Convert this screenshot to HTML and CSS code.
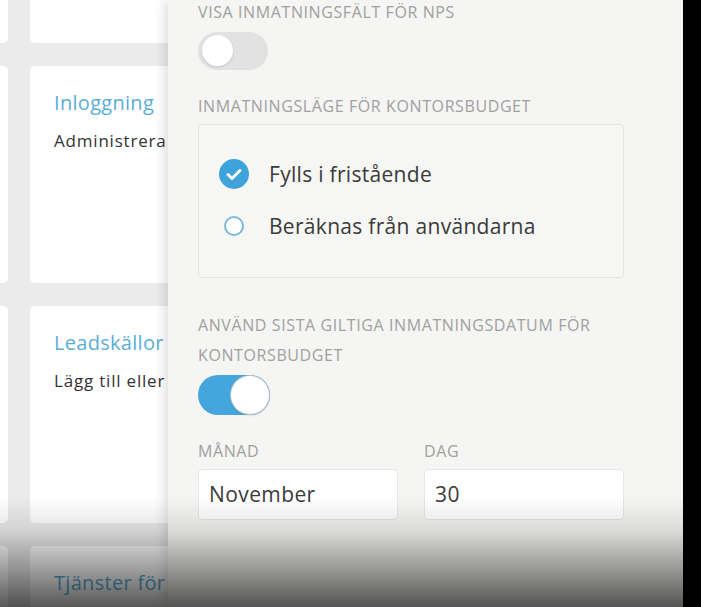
FILE: index.html
```html
<!DOCTYPE html>
<html>
<head>
  <meta charset="utf-8">
  <link rel="stylesheet" href="styles.css">
</head>
<body>
  <div class="screen">
    <div class="stage">
      <div class="board">
        <div class="card"></div>
        <div class="card"></div>
        <div class="card"></div>
        <div class="card">
          <div class="card-title">Inloggning</div>
          <div class="card-text">Administrera</div>
        </div>
        <div class="card"></div>
        <div class="card">
          <div class="card-title">Leadskällor</div>
          <div class="card-text">Lägg till eller</div>
        </div>
        <div class="card"></div>
        <div class="card">
          <div class="card-title">Tjänster för</div>
        </div>
      </div>

      <div class="panel">
        <div class="field-label">Visa inmatningsfält för NPS</div>
        <label class="toggle">
          <input type="checkbox">
          <span class="slider"></span>
        </label>

        <div class="field-label gap-top">Inmatningsläge för kontorsbudget</div>
        <div class="choice-box">
          <div class="choice">
            <svg class="radio-on" width="30" height="30" viewBox="0 0 30 30">
              <circle cx="15" cy="15" r="15" fill="#3fa3db"/>
              <path d="M9 15.5l4 4 8-8" fill="none" stroke="#fff" stroke-width="3" stroke-linecap="round" stroke-linejoin="round"/>
            </svg>
            <span>Fylls i fristående</span>
          </div>
          <div class="choice">
            <svg class="radio-off" width="30" height="30" viewBox="0 0 30 30">
              <circle cx="15" cy="15" r="9" fill="#fff" stroke="#7ab9d9" stroke-width="2"/>
            </svg>
            <span>Beräknas från användarna</span>
          </div>
        </div>

        <div class="field-label gap-top tall">Använd sista giltiga inmatningsdatum för kontorsbudget</div>
        <label class="toggle toggle-big">
          <input type="checkbox" checked>
          <span class="slider"></span>
        </label>

        <div class="date-row">
          <div class="date-col">
            <div class="field-label">Månad</div>
            <div class="text-input">November</div>
          </div>
          <div class="date-col">
            <div class="field-label">Dag</div>
            <div class="text-input">30</div>
          </div>
        </div>
      </div>
    </div>
    <div class="edge"></div>
  </div>
  <div class="fade"></div>
</body>
</html>
```
FILE: styles.css
```css
html, body {
  margin: 0;
  padding: 0;
  width: 701px;
  height: 607px;
  overflow: hidden;
}
body {
  font-family: "Open Sans", Arial, sans-serif;
  color: #333;
  position: relative;
}
.screen {
  display: flex;
  height: 607px;
}
.stage {
  display: flex;
  width: 683px;
  background-color: #ebebeb;
  overflow: hidden;
}
.edge {
  flex: 1;
  background-color: #000;
}
.board {
  width: 360px;
  flex-shrink: 0;
  display: grid;
  grid-template-columns: 200px 220px;
  grid-auto-rows: 217px;
  gap: 23px 22px;
  margin-top: -174px;
  margin-left: -192px;
  overflow: hidden;
}
.card {
  background-color: #fff;
  border-radius: 5px;
  padding: 24px 24px 0;
  white-space: nowrap;
}
.card-title {
  font-size: 20px;
  color: #5aaed8;
  line-height: 26px;
  letter-spacing: 0.3px;
}
.card-text {
  font-size: 17px;
  line-height: 22px;
  color: #333;
  margin-top: 14px;
  letter-spacing: 0.8px;
}
.panel {
  width: 515px;
  flex-shrink: 0;
  box-sizing: border-box;
  position: relative;
  z-index: 1;
  background-color: #f5f5f3;
  box-shadow: -4px 0 10px rgba(0, 0, 0, 0.12);
  padding: 2px 59px 0 30px;
}
.field-label {
  font-size: 16px;
  text-transform: uppercase;
  color: #a0a0a0;
  line-height: 20px;
  letter-spacing: 0.6px;
}
.gap-top {
  margin-top: 26px;
}
.tall {
  line-height: 30px;
  margin-top: 32px;
}
.toggle {
  position: relative;
  display: block;
  width: 70px;
  height: 38px;
  margin-top: 10px;
  cursor: pointer;
}
.toggle-big {
  width: 72px;
  height: 40px;
  margin-top: 5px;
}
.toggle input {
  opacity: 0;
  width: 0;
  height: 0;
}
.slider {
  position: absolute;
  top: 0;
  left: 0;
  right: 0;
  bottom: 0;
  background-color: #e2e2e2;
  border-radius: 20px;
}
.slider:before {
  position: absolute;
  content: "";
  width: 31px;
  height: 31px;
  left: 4px;
  top: 3px;
  background-color: #fff;
  border-radius: 50%;
  box-shadow: 0 1px 3px rgba(0, 0, 0, 0.12);
}
input:checked + .slider {
  background-color: #44a6dc;
}
input:checked + .slider:before {
  width: 38px;
  height: 38px;
  top: 1px;
  left: 33px;
  box-shadow: 0 0 0 1px #b8c4cc, 0 1px 3px rgba(0, 0, 0, 0.2);
}
.choice-box {
  margin-top: 8px;
  border: 1px solid #e4e4e2;
  border-radius: 4px;
  background-color: #f6f6f4;
  padding: 34px 20px 36px 20px;
}
.choice {
  display: flex;
  align-items: center;
  gap: 20px;
  font-size: 21px;
  letter-spacing: 0.3px;
  color: #3a3a3a;
  height: 30px;
}
.choice + .choice {
  margin-top: 22px;
}
.date-row {
  display: flex;
  gap: 26px;
  margin-top: 26px;
}
.date-col {
  flex: 1;
}
.text-input {
  margin-top: 8px;
  height: 51px;
  box-sizing: border-box;
  background-color: #fff;
  border: 1px solid #e6e6e6;
  border-radius: 4px;
  padding: 0 10px;
  font-size: 21px;
  letter-spacing: 0.4px;
  line-height: 49px;
  color: #3a3a3a;
}
.fade {
  position: absolute;
  z-index: 2;
  left: 0;
  right: 0;
  bottom: 0;
  height: 110px;
  background: linear-gradient(to bottom, rgba(0, 0, 0, 0), rgba(0, 0, 0, 0.1) 30%, rgba(0, 0, 0, 0.4) 68%, rgba(0, 0, 0, 0.66));
  pointer-events: none;
}
```
